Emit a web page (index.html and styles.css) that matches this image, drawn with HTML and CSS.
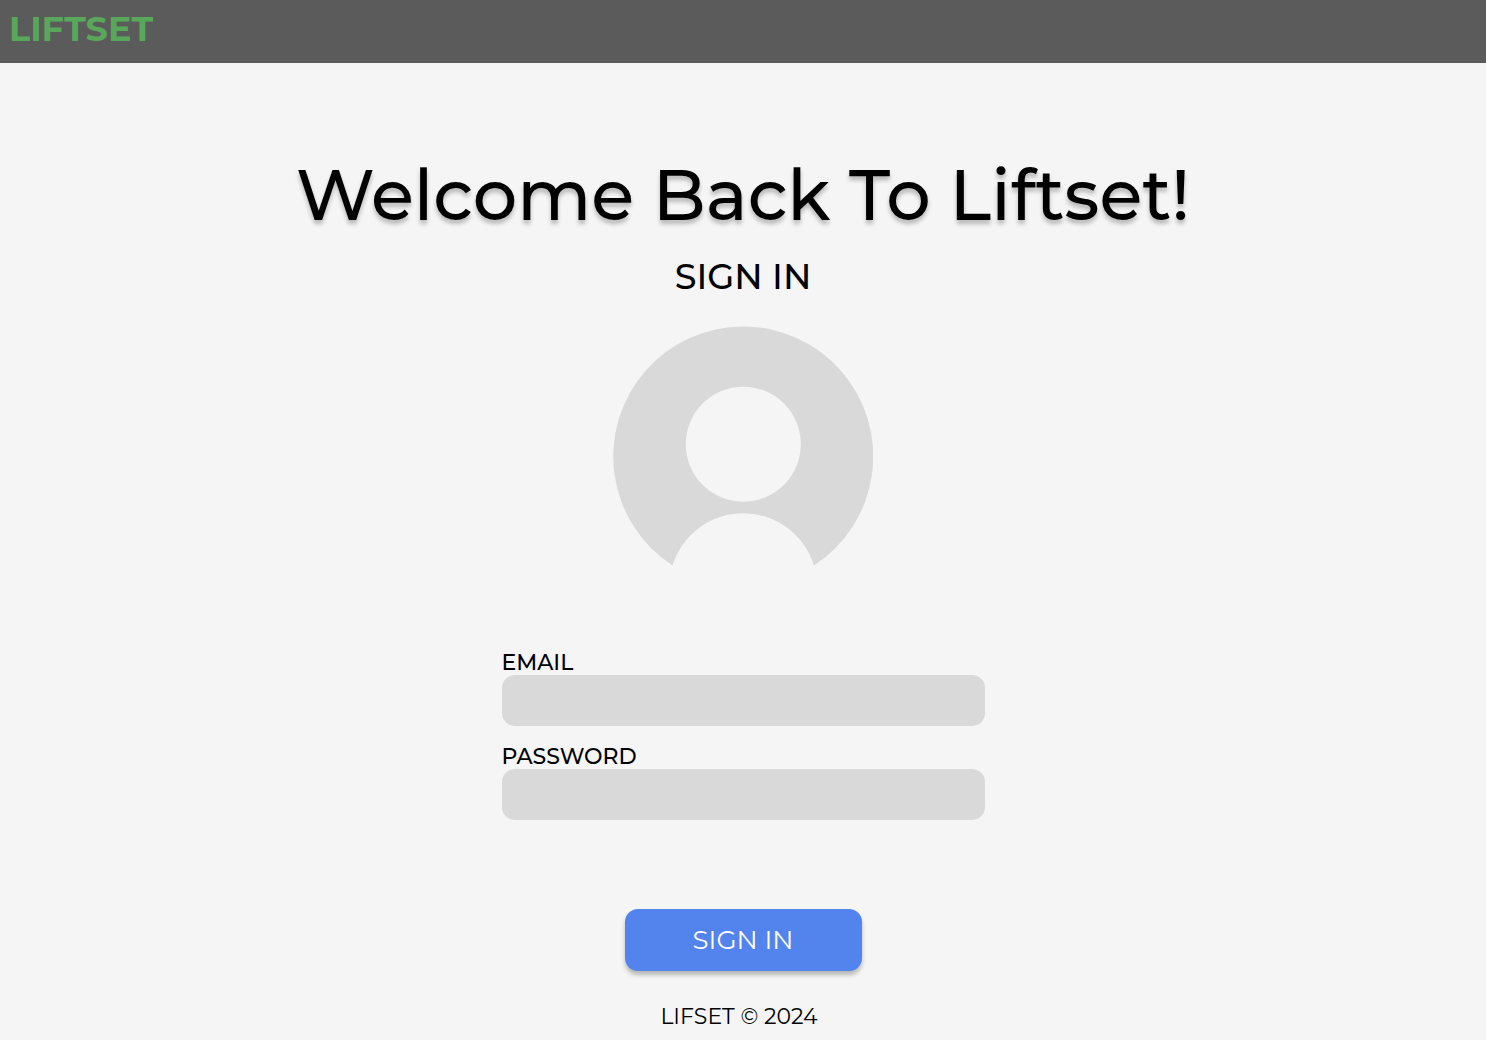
FILE: index.html
```html
<!DOCTYPE html>
<html lang="en">
<head>
  <meta charset="utf-8">
  <meta name="viewport" content="width=device-width, initial-scale=1">
  <title>Liftset</title>
  <link rel="stylesheet" href="styles.css">
</head>
<body>
  <header class="topbar">
    <a class="brand" href="#">LIFTSET</a>
  </header>
  <main class="page">
    <h1 class="title">Welcome Back To Liftset!</h1>
    <h2 class="subtitle">SIGN IN</h2>
    <svg class="avatar" viewBox="0 0 260 240" aria-hidden="true">
      <path fill-rule="evenodd" d="M59.500 239.500A130 130 0 1 1 201 239.500A74 74 0 0 0 59.500 239.500ZM130.300 60.700a57.500 57.500 0 1 0 0 115a57.500 57.500 0 1 0 0-115Z"/>
    </svg>
    <form class="form">
      <div class="field">
        <label for="email">EMAIL</label>
        <input id="email" name="email" type="email">
      </div>
      <div class="field">
        <label for="password">PASSWORD</label>
        <input id="password" name="password" type="password">
      </div>
      <button class="submit" type="submit">SIGN IN</button>
    </form>
  </main>
  <footer class="footer">LIFSET © 2024</footer>
</body>
</html>
```
FILE: styles.css
```css
* {
  box-sizing: border-box;
}

body {
  margin: 0;
  background: #f5f5f5;
  color: #000;
  font-family: Montserrat, Inter, sans-serif;
}

.topbar {
  min-height: 63px;
  padding: 8px 9px;
  background: #5b5b5b;
}

.brand {
  display: inline-block;
  color: #58a75b;
  font-size: 35px;
  font-weight: 700;
  line-height: 42px;
  text-decoration: none;
}

.page {
  display: flex;
  flex-direction: column;
  align-items: center;
  padding: 92px 24px 0;
}

.title {
  margin: 0;
  font-size: 70px;
  font-weight: 500;
  line-height: 80px;
  text-align: center;
  text-shadow: 0 4px 4px rgba(0, 0, 0, 0.25);
}

.subtitle {
  margin: 22px 0 0;
  font-size: 35px;
  font-weight: 500;
  line-height: 40px;
}

.avatar {
  width: 260px;
  max-width: 100%;
  margin-top: 29px;
  fill: #d9d9d9;
}

.form {
  display: flex;
  flex-direction: column;
  gap: 18px;
  width: 100%;
  max-width: 483px;
  margin-top: 84px;
}

.field {
  display: flex;
  flex-direction: column;
}

.field label {
  font-size: 22px;
  font-weight: 500;
  line-height: 25px;
}

.field input {
  width: 100%;
  height: 51px;
  padding: 0 14px;
  border: 0;
  border-radius: 13px;
  background: #d9d9d9;
  font: inherit;
  font-size: 22px;
}

.submit {
  align-self: center;
  width: 237px;
  max-width: 100%;
  margin-top: 71px;
  padding: 15px;
  border: 0;
  border-radius: 13px;
  background: #5383ec;
  box-shadow: 0 4px 4px rgba(0, 0, 0, 0.25);
  color: #fff;
  font-family: inherit;
  font-size: 26px;
  font-weight: 400;
  line-height: 32px;
}

.footer {
  padding: 34px 32px 11px 24px;
  font-size: 22px;
  font-weight: 400;
  line-height: 24px;
  text-align: center;
}
```
